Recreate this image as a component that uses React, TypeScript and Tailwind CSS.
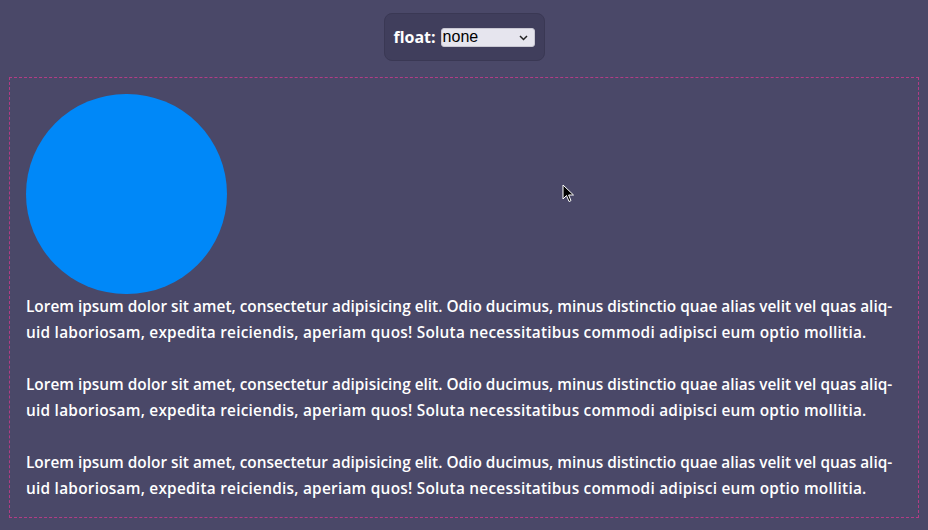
import React from "react";

const Para = () => (
  <p className="m-0">
    Lorem ipsum dolor sit amet, consectetur adipisicing elit. Odio ducimus, minus distinctio quae alias velit vel quas aliq-
    <br />
    <span className="tracking-[0.24px]">
      uid laboriosam, expedita reiciendis, aperiam quos! Soluta necessitatibus commodi adipisci eum optio mollitia.
    </span>
  </p>
);

export default function App() {
  return (
    <div
      className="relative w-[928px] h-[530px] overflow-hidden bg-[#4a4868] px-[9px] pt-[13px] text-white"
      style={{ fontFamily: "'Open Sans', Lato, sans-serif" }}
    >
      <div className="flex justify-center">
        <div className="flex items-center gap-[5px] h-[48px] w-[161px] justify-center rounded-[8px] bg-[#403e5c] border border-[#3a3854]">
          <span className="text-[16px] font-bold">float:</span>
          <div className="relative w-[94px] h-[19px] rounded-[3px] bg-[#e6e5ee] border border-[#c8c7d2] text-black flex items-center pl-[1px]">
            <span className="text-[16px] leading-none" style={{ fontFamily: "'Liberation Sans', Arial, sans-serif" }}>none</span>
            <svg className="absolute right-[6px] top-[6px]" width="9" height="6" viewBox="0 0 9 6">
              <path d="M1 1 L4.5 4.5 L8 1" stroke="#222" strokeWidth="1.5" fill="none" />
            </svg>
          </div>
        </div>
      </div>
      <div className="mt-[16px] h-[441px] border border-dashed border-[#b23c86] p-[16px] text-[15.4px] font-semibold leading-[26px]">
        <div className="w-[201px] h-[200px] rounded-full bg-[#0088f8]" />
        <div className="flex flex-col gap-[26px]">
          <Para />
          <Para />
          <Para />
        </div>
      </div>
      <svg className="absolute left-[562px] top-[184px]" width="13" height="19" viewBox="0 0 13 19">
        <path d="M1 1 L1 15 L4.5 11.5 L7 17.5 L9 16.6 L6.6 11 L11.5 11 Z" fill="#000" stroke="#fff" strokeWidth="1" />
      </svg>
    </div>
  );
}
